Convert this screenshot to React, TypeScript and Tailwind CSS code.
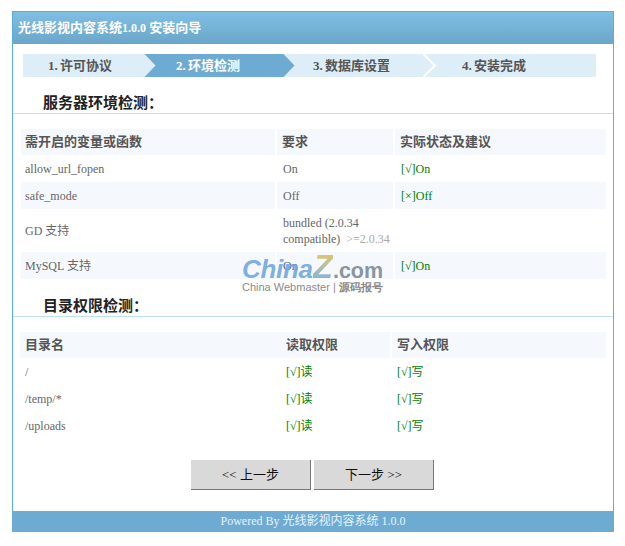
const serif = { fontFamily: '"Liberation Serif", "Noto Sans CJK SC", serif' }

const steps = [
  { name: '1. 许可协议', width: 'w-[121px] pl-[25px]', active: false },
  { name: '2. 环境检测', width: 'w-[127px] pl-[20px]', active: true },
  { name: '3. 数据库设置', width: 'w-[128px] pl-[18px]', active: false },
  { name: '4. 安装完成', width: 'w-[159px] pl-[25px]', active: false },
]

const envRows = [
  { name: 'allow_url_fopen', need: 'On', real: '[√]On', h: 'h-[27px]' },
  { name: 'safe_mode', need: 'Off', real: '[×]Off', h: 'h-[27px]', shade: true },
  { name: 'GD 支持', need: 'bundled (2.0.34 compatible)', extra: '>=2.0.34', real: '', h: 'h-[43px]' },
  { name: 'MySQL 支持', need: 'On', real: '[√]On', h: 'h-[27px]', shade: true },
]

const dirs = ['/', '/temp/*', '/uploads']

function Arrow({ kind }: { kind: number }) {
  // the chevrons between the steps
  if (kind === 0) {
    return (
      <svg width="12" height="23" className="block shrink-0">
        <rect width="12" height="23" fill="#6eabd3" />
        <path d="M0 0H0.5L11.5 11.5L0.5 23H0Z" fill="#ddeef9" />
      </svg>
    )
  }
  if (kind === 1) {
    return (
      <svg width="12" height="23" className="block shrink-0">
        <rect width="12" height="23" fill="#ddeef9" />
        <path d="M0 0H0.5L11.5 11.5L0.5 23H0Z" fill="#6eabd3" />
      </svg>
    )
  }
  return (
    <svg width="14" height="23" className="block shrink-0">
      <rect width="14" height="23" fill="#ddeef9" />
      <path d="M0.5 0L12 11.5L0.5 23" fill="none" stroke="#ffffff" strokeWidth="2" />
    </svg>
  )
}

function Title({ text, h }: { text: string; h: string }) {
  return (
    <div className={`${h} flex items-end pl-[30px] border-b border-[#bfe0ee]`}>
      <span className="text-[15px] font-bold text-[#222] leading-[20px]">{text}</span>
    </div>
  )
}

export default function App() {
  return (
    <div className="w-[625px] h-[546px] bg-white pt-[11px] pl-[12px]" style={serif}>
      <div className="relative w-[602px] h-[521px] flex flex-col border-x border-t border-[#5aaede]">
        <div className="h-[32px] shrink-0 bg-gradient-to-b from-[#7fbfe3] to-[#6ba6ca] flex items-center pl-[5px] text-[13px] font-bold text-white">
          <span>
            光线影视内容系统<span className="text-[12px]">1.0.0</span> 安装向导
          </span>
        </div>

        <div className="mt-[10px] ml-[10px] flex h-[23px] w-[573px] text-[13px] font-bold leading-[23px] [word-spacing:-1px]">
          {steps.map((s, i) => (
            <div key={s.name} className="flex">
              <div className={`${s.width} ${s.active ? 'bg-[#6eabd3] text-white' : 'bg-[#ddeef9] text-[#555]'} whitespace-nowrap`}>
                {s.name}
              </div>
              {i < 3 && <Arrow kind={i} />}
            </div>
          ))}
        </div>

        <Title text="服务器环境检测：" h="h-[37px]" />

        <table className="mt-[15px] ml-[8px] w-[585px] table-fixed border-separate border-spacing-0 text-[12px] text-[#666]">
          <colgroup>
            <col className="w-[256px]" />
            <col className="w-[118px]" />
            <col />
          </colgroup>
          <thead>
            <tr className="h-[26px] text-[13px] text-[#555]">
              <th className="bg-[#f5f9fd] border-r-2 border-white text-left font-bold pl-[4px]">需开启的变量或函数</th>
              <th className="bg-[#f5f9fd] border-r-2 border-white text-left font-bold pl-[5px]">要求</th>
              <th className="bg-[#f5f9fd] text-left font-bold pl-[5px]">实际状态及建议</th>
            </tr>
          </thead>
          <tbody>
            {envRows.map((r) => (
              <tr key={r.name} className={r.h}>
                <td className={`${r.shade ? 'bg-[#f5f9fd]' : ''} border-r-2 border-white pl-[4px]`}>{r.name}</td>
                <td className={`${r.shade ? 'bg-[#f5f9fd]' : ''} border-r-2 border-white pl-[6px] leading-[16px]`}>
                  {r.need}
                  {r.extra && <span className="text-[#aaa]">&nbsp; {r.extra}</span>}
                </td>
                <td className={`${r.shade ? 'bg-[#f5f9fd]' : ''} pl-[6px] text-[#008000]`}>{r.real}</td>
              </tr>
            ))}
          </tbody>
        </table>

        <Title text="目录权限检测：" h="h-[38px]" />

        <table className="mt-[15px] ml-[7px] w-[586px] table-fixed border-separate border-spacing-0 text-[12px] text-[#666]">
          <colgroup>
            <col className="w-[261px]" />
            <col className="w-[111px]" />
            <col />
          </colgroup>
          <thead>
            <tr className="h-[26px] text-[13px] text-[#555]">
              <th className="bg-[#f5f9fd] text-left font-bold pl-[5px]">目录名</th>
              <th className="bg-[#f5f9fd] border-r-2 border-white text-left font-bold pl-[5px]">读取权限</th>
              <th className="bg-[#f5f9fd] text-left font-bold pl-[5px]">写入权限</th>
            </tr>
          </thead>
          <tbody>
            {dirs.map((d) => (
              <tr key={d} className="h-[27px]">
                <td className="pl-[5px]">{d}</td>
                <td className="pl-[5px] text-[#008000]">[√]读</td>
                <td className="pl-[5px] text-[#008000]">[√]写</td>
              </tr>
            ))}
          </tbody>
        </table>

        <div className="mt-[21px] ml-[178px] flex gap-[3px]">
          <button className="w-[120px] h-[30px] bg-[#d9d9d9] border-r border-b border-[#777] text-[13px] text-[#111]">
            &lt;&lt; 上一步
          </button>
          <button className="w-[120px] h-[30px] bg-[#d9d9d9] border-r border-b border-[#777] text-[13px] text-[#111]">
            下一步 &gt;&gt;
          </button>
        </div>

        <div className="mt-auto h-[21px] -mx-px bg-[#6eabd3] text-center text-[12px] leading-[21px] text-[#e6f2fa]">
          Powered By 光线影视内容系统 1.0.0
        </div>

        {/* watermark sits over the table */}
        <div className="absolute left-[229px] top-[241px] w-[150px] font-['Liberation_Sans'] pointer-events-none">
          <div className="flex items-baseline h-[28px] leading-[28px] whitespace-nowrap font-bold">
            <span className="italic text-[26px] text-[#6fa5e0]/90 tracking-[-0.3px]">China</span>
            <span className="italic text-[33px] bg-gradient-to-b from-[#e3c65a] to-[#7fb0e0] bg-clip-text text-transparent">Z</span>
            <span className="text-[21.5px] text-[#8a95a0]">.com</span>
          </div>
          <div className="-mt-[1px] text-[11px] leading-[14px] whitespace-nowrap text-[#8a8a8a]">
            China Webmaster | <span className="font-bold">源码报号</span>
          </div>
        </div>
      </div>
    </div>
  )
}
